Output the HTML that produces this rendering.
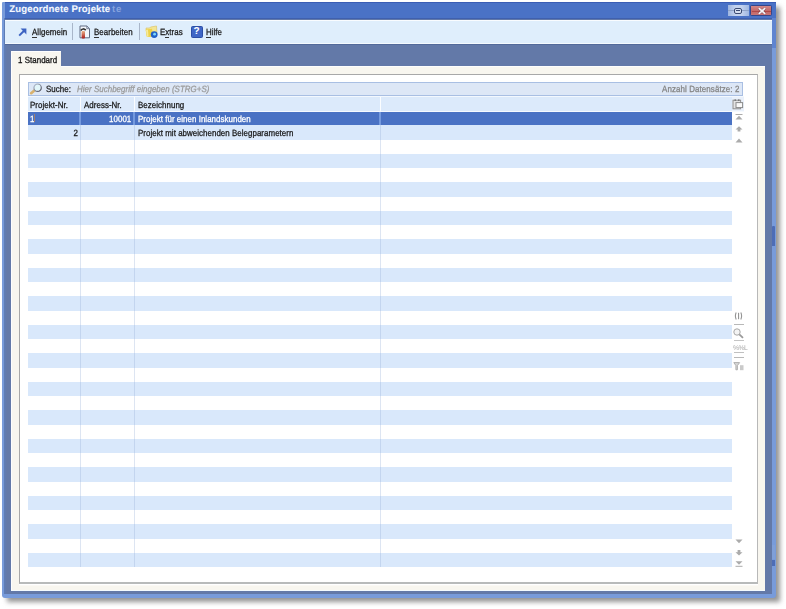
<!DOCTYPE html>
<html><head><meta charset="utf-8">
<style>
*{margin:0;padding:0;box-sizing:border-box}
html,body{width:786px;height:609px;overflow:hidden;background:#fff;font-family:"Liberation Sans",sans-serif;font-size:9px;letter-spacing:0.05px;color:#000}
div,span,svg{position:absolute}
.t{white-space:nowrap;line-height:10px;-webkit-text-stroke:0.28px currentColor;transform:scaleX(0.88);transform-origin:0 0;text-rendering:geometricPrecision}
#shadow{left:7px;top:7px;width:773px;height:595px;background:#959595;filter:blur(2.5px)}
#win{left:2px;top:2px;width:774px;height:596px;background:#789bda;border-radius:1px 1px 3px 3px}
#inner{left:4.2px;top:18px;width:767.6px;height:576.3px;background:linear-gradient(90deg,#5d7db8,#6379a8 3px,#6379a8)}
#title{left:4.6px;top:2px;width:771.4px;height:17.2px;background:#4a72c6;border-top:1px solid #3a5db5;border-bottom:1.2px solid #3f60ae}
#tb{left:4.8px;top:19.5px;width:767.5px;height:24.6px;background:#dfeefc;border-top:1.6px solid #f9fcff;border-bottom:1.2px solid #f4f9fe}
#tbline{left:4.8px;top:44px;width:767.5px;height:1px;background:#536a9a}
#tab{left:11px;top:51px;width:50px;height:16px;background:#f8f6ef;border-top:1px solid #fefefe;border-left:1px solid #fefefe}
#panel{left:11px;top:66px;width:754px;height:525px;background:#f8f6ef;border-left:1px solid #fefefe;border-top:1px solid #fdfdfc;border-bottom:1px solid #f4fbff}
#box{left:19px;top:74px;width:739px;height:510px;background:#fff;border:1px solid #b0b0b0;border-top-color:#a8a8a8;border-left:1.2px solid #a8a8a8;border-right:1.5px solid #b8b8b8;border-bottom:2px solid #b8baba;box-shadow:0 1.4px 0 #fff}
#search{left:28px;top:82px;width:715px;height:14px;background:#dde7f6;border:1px solid #a9bfe3}
#hdr{left:28px;top:96px;width:716px;height:16px;background:#dceafb;border-top:1px solid #f3f8fe;border-bottom:1.4px solid #f6faff}
.row{left:28px;width:704px;height:14.23px}
.blue{background:#d9e8fb}
.sel{background:#4a72c4}
.vl{width:1.1px;background:rgba(150,175,215,0.32)}
.sep{width:1px;background:#a9b6c9}
u{text-decoration:none;border-bottom:1px solid #000}
.gray{color:#8f8f8f}
.ns{transform:none}
.ra{transform-origin:100% 0}
.ic{fill:#ababab}
</style></head><body>
<div id="shadow"></div>
<div id="win"></div>
<div id="inner"></div>
<div id="title"></div>
<span class="t ns" style="left:9.3px;top:4.6px;font-size:9.6px;font-weight:bold;color:#f4f8ff;letter-spacing:0.12px;-webkit-text-stroke:0.1px #f4f8ff">Zugeordnete Projekte</span>
<span class="t ns" style="left:111.9px;top:4.6px;font-size:9.6px;font-weight:bold;color:#86a3de;letter-spacing:0.9px;-webkit-text-stroke:0">te</span>
<!-- title buttons -->
<div style="left:728px;top:5.3px;width:20.5px;height:11.2px;background:linear-gradient(90deg,#9fb6e0,#c3d2ee 35%,#c3d2ee 65%,#9fb6e0);"></div>
<div style="left:728px;top:10.3px;width:20.5px;height:1px;background:#8fa3c8"></div>
<div style="left:734.3px;top:7.6px;width:8px;height:6.6px;border:1.2px solid #3a4a72;border-radius:2px;background:#d6dff0"></div>
<div style="left:736.3px;top:9.8px;width:4px;height:1.6px;background:#3a4a72"></div>
<div style="left:750.3px;top:5.3px;width:21.3px;height:11.2px;background:linear-gradient(180deg,#d28888,#c26868 55%,#c87474);border:1px solid #34468a;border-radius:1.5px"></div>
<div style="left:751.5px;top:10.5px;width:19px;height:1px;background:#b04848"></div>
<svg style="left:756.5px;top:6.5px" width="10" height="8" viewBox="0 0 10 8"><path d="M1.8 1.2 L8.2 6.8 M8.2 1.2 L1.8 6.8" stroke="#5a3040" stroke-width="2.6" opacity="0.6"/><path d="M1.8 1.2 L8.2 6.8 M8.2 1.2 L1.8 6.8" stroke="#f4f4f8" stroke-width="1.7"/></svg>
<div style="left:772.3px;top:225.6px;width:2.8px;height:20.4px;background:#4d6db6;border-radius:1px 1px 0 0"></div>
<div style="left:772px;top:18px;width:3.8px;height:30px;background:#5f84d0"></div>
<div style="left:772.3px;top:559.5px;width:2.8px;height:6.5px;background:#4d6db6"></div>
<div style="left:772.3px;top:545px;width:2.8px;height:14px;background:#7f9fd8"></div>
<div id="tb"></div>
<div id="tbline"></div>
<!-- toolbar items -->
<svg style="left:18px;top:28px" width="9" height="8.5" viewBox="0 0 9 8.5"><path d="M1.2 7.6 L6.6 2.2" stroke="#3d63c2" stroke-width="2" fill="none"/><path d="M2.6 0.6 L8.4 0.6 L8.4 6.4 Z" fill="#3d63c2"/></svg>
<span class="t" style="left:32px;top:27px;color:#1a1a1a">Allgemein</span>
<div style="left:32px;top:36.6px;width:5px;height:0.9px;background:#333"></div>
<div class="sep" style="left:72.3px;top:22.5px;height:17px"></div>
<svg style="left:78.5px;top:25px" width="12" height="14" viewBox="0 0 12 14"><path d="M1 1 L7.8 1 L10.5 3.7 L10.5 12.8 L1 12.8 Z" fill="#f2f6fc" stroke="#5f6a82" stroke-width="1"/><path d="M7.8 1 L7.8 3.7 L10.5 3.7" fill="none" stroke="#5f6a82" stroke-width="0.8"/><path d="M1.8 5.5 Q4 2.5 6.8 5.2" fill="none" stroke="#333" stroke-width="1.6"/><defs><linearGradient id="rg" x1="0" y1="0" x2="0" y2="1"><stop offset="0" stop-color="#e9b088"/><stop offset="1" stop-color="#a81818"/></linearGradient></defs><rect x="2.6" y="6" width="3.4" height="7.6" rx="1" fill="url(#rg)"/></svg>
<span class="t" style="left:93.5px;top:27px;color:#1a1a1a">Bearbeiten</span>
<div style="left:93.5px;top:36.6px;width:5.5px;height:0.9px;background:#333"></div>
<div class="sep" style="left:139.2px;top:22.5px;height:17px"></div>
<svg style="left:144.5px;top:24.8px" width="13.5" height="13.5" viewBox="0 0 13.5 13.5"><path d="M1 3 L4.5 3 L5.5 2 L11.5 1 L12 9 L2 11.5 Z" fill="#f3e594" stroke="#d8c060" stroke-width="0.6"/><path d="M0.6 4.5 L7 3.8 L8 11.8 L2 12 Z" fill="#ecd24a"/><path d="M1 5 L3 4.8 L3.5 11.5 L2 11.8Z" fill="#f6ea9a"/><circle cx="9.2" cy="9.6" r="3.4" fill="#1f5fc8"/><circle cx="9.6" cy="9.2" r="1.4" fill="#7fd8f8"/></svg>
<span class="t" style="left:160px;top:27px;color:#1a1a1a">Extras</span>
<div style="left:165px;top:36.6px;width:4.2px;height:0.9px;background:#333"></div>
<div style="left:191.2px;top:26.1px;width:11.5px;height:11.6px;background:#3f66c6;border:1px solid #2c4ea6;border-radius:1.5px"></div>
<span class="t ns" style="left:193.6px;top:26.8px;font-size:10px;font-weight:bold;color:#fff;-webkit-text-stroke:0">?</span>
<span class="t" style="left:206px;top:27px;color:#1a1a1a">Hilfe</span>
<div style="left:206px;top:36.6px;width:5.2px;height:0.9px;background:#333"></div>

<div id="panel"></div>
<div id="tab"></div>
<span class="t" style="left:18px;top:54.5px;color:#111">1 Standard</span>
<div id="box"></div>
<div id="search"></div>
<svg style="left:29px;top:83px" width="14" height="12" viewBox="0 0 14 12"><defs><linearGradient id="lg" x1="0" y1="0" x2="1" y2="1"><stop offset="0" stop-color="#b8c4d8"/><stop offset="1" stop-color="#4a4a5a"/></linearGradient></defs><path d="M5.6 7.2 L2.2 10.2" stroke="#d8b26e" stroke-width="2.6" stroke-linecap="round"/><circle cx="8.6" cy="4.7" r="3.7" fill="#e2f6fa" stroke="url(#lg)" stroke-width="1.2"/></svg>
<span class="t" style="left:46.4px;top:84px;color:#1a1a1a">Suche:</span>
<span class="t gray" style="left:77px;top:84px;font-style:italic;color:#9a9a9a">Hier Suchbegriff eingeben (STRG+S)</span>
<span class="t" style="left:661.5px;top:84px;color:#858585;letter-spacing:0.12px">Anzahl Datensätze: 2</span>
<div id="hdr"></div>
<div class="row sel" style="top:112px;height:12.7px"></div>
<div class="row blue" style="top:125.10px;height:14.6px"></div>
<div class="row blue" style="top:153.62px;height:14.6px"></div>
<div class="row blue" style="top:182.14px;height:14.6px"></div>
<div class="row blue" style="top:210.66px;height:14.6px"></div>
<div class="row blue" style="top:239.18px;height:14.6px"></div>
<div class="row blue" style="top:267.70px;height:14.6px"></div>
<div class="row blue" style="top:296.22px;height:14.6px"></div>
<div class="row blue" style="top:324.74px;height:14.6px"></div>
<div class="row blue" style="top:353.26px;height:14.6px"></div>
<div class="row blue" style="top:381.78px;height:14.6px"></div>
<div class="row blue" style="top:410.30px;height:14.6px"></div>
<div class="row blue" style="top:438.82px;height:14.6px"></div>
<div class="row blue" style="top:467.34px;height:14.6px"></div>
<div class="row blue" style="top:495.86px;height:14.6px"></div>
<div class="row blue" style="top:524.38px;height:14.6px"></div>
<div class="row blue" style="top:552.90px;height:14.6px"></div>
<div class="vl" style="left:79.5px;top:125px;height:442.4px"></div>
<div class="vl" style="left:79.5px;top:97px;height:14px;background:#fbfdff;width:1.2px"></div>
<div class="vl" style="left:79.2px;top:112px;height:12.7px;background:#759ade;width:1.6px"></div>
<div class="vl" style="left:133.5px;top:125px;height:442.4px"></div>
<div class="vl" style="left:133.5px;top:97px;height:14px;background:#fbfdff;width:1.2px"></div>
<div class="vl" style="left:133.2px;top:112px;height:12.7px;background:#759ade;width:1.6px"></div>
<div class="vl" style="left:379.5px;top:125px;height:442.4px"></div>
<div class="vl" style="left:379.5px;top:97px;height:14px;background:#fbfdff;width:1.2px"></div>
<div class="vl" style="left:379.2px;top:112px;height:12.7px;background:#759ade;width:1.6px"></div>

<span class="t" style="left:30px;top:100px;color:#1a1a1a">Projekt-Nr.</span>
<span class="t" style="left:84px;top:100px;color:#1a1a1a">Adress-Nr.</span>
<span class="t" style="left:138px;top:100px;color:#1a1a1a">Bezeichnung</span>
<span class="t" style="left:30.3px;top:114px;color:#fff">1</span>
<div style="left:34.2px;top:114.3px;width:1.2px;height:7.8px;background:#a08070"></div>
<span class="t ra" style="right:655px;top:114px;color:#fff">10001</span>
<span class="t" style="left:137.6px;top:114px;color:#fff">Projekt für einen Inlandskunden</span>
<span class="t ra" style="right:708px;top:128px;color:#1a1a1a">2</span>
<span class="t" style="left:137.6px;top:128px;color:#1a1a1a">Projekt mit abweichenden Belegparametern</span>
<!-- right icons -->
<div style="left:731.8px;top:97px;width:12.5px;height:14px;background:#eaf1fb"></div>
<svg style="left:731.5px;top:99px" width="12" height="11" viewBox="0 0 12 11"><rect x="1" y="1.2" width="7.6" height="8.6" fill="#e4e4e4" stroke="#8e8e8e" stroke-width="1"/><rect x="2.5" y="0.5" width="1.5" height="1.2" fill="#666"/><rect x="6" y="0.5" width="1.5" height="1.2" fill="#666"/><rect x="4" y="3.6" width="6.6" height="5" fill="#fafafa" stroke="#8a8a8a" stroke-width="1"/></svg>
<svg style="left:734.5px;top:114px" width="8" height="6" viewBox="0 0 8 6"><rect x="0.5" y="0" width="7" height="1" class="ic"/><path d="M4 1.8 L7.5 5.6 L0.5 5.6Z" class="ic"/></svg>
<svg style="left:734.5px;top:126px" width="8" height="6" viewBox="0 0 8 6"><path d="M4 0.3 L7.5 3.5 L0.5 3.5Z M2.6 3 L5.4 3 L5.4 5.5 L2.6 5.5Z" class="ic"/></svg>
<svg style="left:734.5px;top:137.5px" width="8" height="5" viewBox="0 0 8 5"><path d="M4 0.4 L7.5 4.4 L0.5 4.4Z" class="ic"/></svg>
<svg style="left:734px;top:312px" width="9" height="8" viewBox="0 0 9 8"><path d="M2.2 0.6 Q0.6 4 2.2 7.4 M6.8 0.6 Q8.4 4 6.8 7.4" fill="none" stroke="#959595" stroke-width="1.1"/><rect x="4" y="0.8" width="1.1" height="6.4" fill="#959595"/></svg>
<div style="left:733.5px;top:324px;width:10px;height:0.8px;background:#b8b8b8"></div>
<svg style="left:733px;top:327.5px" width="11" height="11" viewBox="0 0 11 11"><circle cx="4" cy="4" r="3.2" fill="#f4f4f4" stroke="#a8a8a8" stroke-width="1"/><path d="M6.3 6.3 L10 9.8" stroke="#9a9a9a" stroke-width="1.8"/></svg>
<div style="left:733.5px;top:340.3px;width:10px;height:0.8px;background:#c4c4c4"></div>
<span class="t ns" style="left:733.2px;top:343.5px;color:#aaaaaa;font-size:6.8px;letter-spacing:-0.6px;-webkit-text-stroke:0;will-change:transform">%%L</span>
<div style="left:733.5px;top:351.8px;width:10px;height:0.8px;background:#c0c0c0"></div>
<div style="left:733.5px;top:356.8px;width:10px;height:0.8px;background:#b8b8b8"></div>
<svg style="left:733px;top:362px" width="11" height="8.5" viewBox="0 0 11 8.5"><path d="M0.8 0.6 L6.6 0.6 L4.4 3.6 L4.4 7.8 L2.9 7.8 L2.9 3.6Z" fill="#d8d8d8" stroke="#a8a8a8" stroke-width="0.9"/><rect x="7" y="3.2" width="3.5" height="5" fill="#cacaca"/></svg>
<svg style="left:734.5px;top:538.8px" width="8" height="5" viewBox="0 0 8 5"><path d="M0.5 0.4 L7.5 0.4 L4 4.2Z" class="ic"/></svg>
<svg style="left:734.5px;top:549.5px" width="8" height="6" viewBox="0 0 8 6"><path d="M2.6 0 L5.4 0 L5.4 2.3 L7.5 2.3 L4 5.5 L0.5 2.3 L2.6 2.3Z" class="ic"/></svg>
<svg style="left:734.5px;top:560.8px" width="8" height="6" viewBox="0 0 8 6"><path d="M0.5 0.2 L7.5 0.2 L4 3.8Z" class="ic"/><rect x="0.5" y="4.8" width="7" height="1" class="ic"/></svg>
</body></html>
